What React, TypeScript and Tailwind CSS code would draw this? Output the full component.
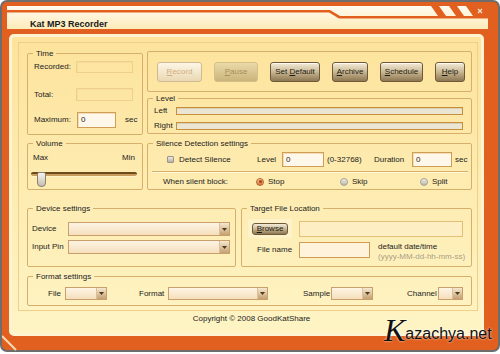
import type { ReactNode } from "react";

function Group({ title, className, children }: { title: string; className: string; children?: ReactNode }) {
  return (
    <fieldset className={`border border-[#d6b06a] rounded-[2px] ${className}`}>
      <legend className="ml-[5px] px-[3px] text-[8px] leading-[9px] text-[#222]">{title}</legend>
      {children}
    </fieldset>
  );
}

function Btn({ children, w, state = "on" }: { children: ReactNode; w: string; state?: "on" | "off" | "dim" }) {
  const look =
    state === "on"
      ? "border-[#6e5a3a] from-[#f4ecda] via-[#c9b792] to-[#8c7752] text-[#1d1a14] shadow-[inset_0_1px_0_#fffaf0]"
      : state === "off"
        ? "border-[#d0b994] from-[#fdf6e6] to-[#ead8b2] text-[#cfae80]"
        : "border-[#d4bf88] from-[#eadaa8] to-[#cbb47c] text-[#a88e5c]";
  return (
    <div className={`${w} h-[20px] flex items-center justify-center rounded-[3px] border bg-linear-to-b ${look}`}>
      {children}
    </div>
  );
}

function Combo({ w }: { w: string }) {
  return (
    <div className={`${w} h-full flex border border-[#c9a06c] bg-linear-to-b from-[#fdf4e4] to-[#f5dfbb]`}>
      <div className="flex-1" />
      <div className="w-[10px] flex items-center justify-center border-l border-[#dcc09a] bg-linear-to-b from-[#f6e8cf] to-[#c4a172]">
        <svg width="5" height="3" viewBox="0 0 5 3">
          <path d="M0 0h5L2.5 3z" fill="#4a3a22" />
        </svg>
      </div>
    </div>
  );
}

function Field({ w, h, value }: { w: string; h: string; value?: string }) {
  return (
    <div className={`${w} ${h} flex items-center pl-[3px] border border-[#cf9d55] bg-[#fff8ea] shadow-[inset_1px_1px_0_#f3dcb4]`}>
      {value}
    </div>
  );
}

function Radio({ on }: { on?: boolean }) {
  return (
    <div
      className={`w-[8px] h-[8px] rounded-full border flex items-center justify-center ${
        on ? "border-[#b5662c] bg-linear-to-b from-[#f7c7a0] to-[#d0733a]" : "border-[#a8a296] bg-linear-to-b from-[#f1eee6] to-[#bdb7aa]"
      }`}
    >
      {on && <div className="w-[3px] h-[3px] rounded-full bg-[#b2400e]" />}
    </div>
  );
}

export default function App() {
  return (
    <div className="relative w-[500px] h-[354px] bg-white font-['Liberation_Sans',Arial,sans-serif] text-[8px] leading-[10px] text-[#222]">
      <div className="w-[500px] h-[352px] border-2 border-[#6d6d6d] rounded-[7px] bg-[#e1601f] overflow-hidden flex flex-col">
        {/* title bar */}
        <div className="relative mt-[4px] ml-[5px] w-[481px] h-[23px] shrink-0 bg-linear-to-b from-[#fffaf0] to-[#fdebb8]">
          <svg className="absolute inset-0" width="481" height="23" viewBox="0 0 481 23">
            <path d="M0 4H323L333 10H481V12.5H332L322 6.5H0Z" fill="#e1601f" />
            <path d="M424 0h8l7 10h-8z" fill="#e1601f" />
            <path d="M442 0h8l7 10h-8z" fill="#e1601f" />
            <path d="M459 0h22v10h-15z" fill="#e1601f" />
            <path d="M471 3l4 4M475 3l-4 4" stroke="#f6e4cc" strokeWidth="1.2" />
          </svg>
          <div className="relative pl-[23px] pt-[13px] text-[9px] leading-[10px] font-bold text-[#1a1a1a]">Kat MP3 Recorder</div>
        </div>

        {/* main panel */}
        <div className="mt-[5px] ml-[7px] w-[475px] h-[302px] shrink-0 border-[3px] border-[#fff4d2] rounded-[5px] bg-linear-to-b from-[#fde39c] to-[#fef4c4] flex flex-col">
          <div className="ml-[6px] mt-[5px] w-[460px] h-[269px] border border-[#ecd08c] pl-[8px] pr-[5px] pt-[6px] pb-[4px] flex flex-col">
            {/* row 1 */}
            <div className="h-[86px] flex gap-[4px]">
              <Group title="Time" className="w-[116px] h-full">
                <div className="pl-[6px] flex flex-col">
                  <div className="mt-[3px] h-[12px] flex items-center">
                    <span className="w-[42px]">Recorded:</span>
                    <div className="w-[57px] h-[12px] border border-[#efd08a] shadow-[inset_1px_1px_0_#f6dc9e]" />
                  </div>
                  <div className="mt-[15px] h-[13px] flex items-center">
                    <span className="w-[42px]">Total:</span>
                    <div className="w-[57px] h-[13px] border border-[#efd08a] shadow-[inset_1px_1px_0_#f6dc9e]" />
                  </div>
                  <div className="mt-[11px] h-[16px] flex items-center">
                    <span className="w-[43px]">Maximum:</span>
                    <Field w="w-[39px]" h="h-[16px]" value="0" />
                    <span className="ml-[9px]">sec</span>
                  </div>
                </div>
              </Group>

              <div className="w-[325px] flex flex-col">
                <div className="mt-[2px] h-[41px] border border-[#d6b06a] rounded-[2px] flex items-center pl-[9px] gap-[12px]">
                  <Btn w="w-[45px]" state="off">
                    <span><u>R</u>ecord</span>
                  </Btn>
                  <Btn w="w-[44px]" state="dim">
                    <span><u>P</u>ause</span>
                  </Btn>
                  <Btn w="w-[50px]">
                    <span>Set <u>D</u>efault</span>
                  </Btn>
                  <Btn w="w-[36px]">
                    <span><u>A</u>rchive</span>
                  </Btn>
                  <Btn w="w-[43px]">
                    <span><u>S</u>chedule</span>
                  </Btn>
                  <Btn w="w-[30px]">
                    <span><u>H</u>elp</span>
                  </Btn>
                </div>
                <Group title="Level" className="mt-[2px] h-[40px]">
                  <div className="pl-[6px] flex flex-col">
                    <div className="mt-[2px] h-[12px] flex items-center">
                      <span className="w-[22px]">Left</span>
                      <div className="w-[287px] h-[8px] border border-[#c68f38] bg-[#ebe5d3] shadow-[inset_0_1px_0_#d9cfb6]" />
                    </div>
                    <div className="mt-[3px] h-[12px] flex items-center">
                      <span className="w-[22px]">Right</span>
                      <div className="w-[287px] h-[8px] border border-[#c68f38] bg-[#ebe5d3] shadow-[inset_0_1px_0_#d9cfb6]" />
                    </div>
                  </div>
                </Group>
              </div>
            </div>

            {/* row 2 */}
            <div className="mt-[4px] h-[51px] flex gap-[4px]">
              <Group title="Volume" className="w-[116px] h-full">
                <div className="mt-[5px] h-[10px] pl-[5px] pr-[7px] flex items-center justify-between">
                  <span>Max</span>
                  <span>Min</span>
                </div>
                <div className="relative mt-[9px] ml-[3px] mr-[5px] h-[16px]">
                  <div className="mt-[1px] h-[4px] rounded-[2px] border-t-2 border-[#6f4a1c] bg-[#c99c5c] shadow-[0_1px_0_#fff2c8]" />
                  <div className="absolute left-[6px] top-0 w-[9px] h-[15px] rounded-[2px] rounded-b-[4px] border border-[#8a8070] bg-linear-to-b from-[#f7f4ee] to-[#c6bfae]" />
                </div>
              </Group>

              <Group title="Silence Detection settings" className="w-[325px] h-full">
                <div className="mt-[4px] h-[15px] pl-[19px] flex items-center">
                  <div className="w-[90px] flex items-center">
                    <div className="w-[7px] h-[7px] rounded-[1px] border border-[#9a948a] bg-linear-to-b from-[#eeebe4] to-[#b5afa3]" />
                    <span className="ml-[5px]">Detect Silence</span>
                  </div>
                  <span className="w-[25px]">Level</span>
                  <Field w="w-[42px]" h="h-[15px]" value="0" />
                  <span className="ml-[3px] w-[47px]">(0-32768)</span>
                  <span className="w-[38px]">Duration</span>
                  <Field w="w-[40px]" h="h-[15px]" value="0" />
                  <span className="ml-[3px]">sec</span>
                </div>
                <div className="mt-[4px] ml-[4px] mr-[3px] h-[1px] bg-[#d6b06a] shadow-[0_1px_0_#fff6d6]" />
                <div className="mt-[4px] h-[11px] pl-[15px] flex items-center">
                  <span className="w-[93px]">When silent block:</span>
                  <div className="w-[84px] flex items-center">
                    <Radio on />
                    <span className="ml-[4px]">Stop</span>
                  </div>
                  <div className="w-[80px] flex items-center">
                    <Radio />
                    <span className="ml-[4px]">Skip</span>
                  </div>
                  <div className="flex items-center">
                    <Radio />
                    <span className="ml-[4px]">Split</span>
                  </div>
                </div>
              </Group>
            </div>

            {/* row 3 */}
            <div className="mt-[14px] h-[63px] flex gap-[5px]">
              <Group title="Device settings" className="w-[209px] h-full">
                <div className="pl-[4px] flex flex-col">
                  <div className="mt-[9px] h-[14px] flex items-center">
                    <span className="w-[36px]">Device</span>
                    <Combo w="w-[162px]" />
                  </div>
                  <div className="mt-[4px] h-[14px] flex items-center">
                    <span className="w-[36px]">Input Pin</span>
                    <Combo w="w-[162px]" />
                  </div>
                </div>
              </Group>

              <Group title="Target File Location" className="w-[231px] h-full">
                <div className="mt-[6px] h-[19px] pl-[6px] flex items-center">
                  <div className="w-[44px] h-[19px] rounded-[2px] bg-[#fef3c8] flex items-center justify-center">
                    <div className="w-[36px] h-[12px] rounded-[3px] border border-[#6e5a3a] bg-linear-to-b from-[#f4ecda] via-[#c9b792] to-[#8c7752] flex items-center justify-center text-[#1d1a14]">
                      <span><u>B</u>rowse</span>
                    </div>
                  </div>
                  <div className="ml-[7px] w-[164px] h-[16px] border border-[#e3c078] bg-[#fdeec4]" />
                </div>
                <div className="mt-[4px] pl-[6px] flex items-start">
                  <span className="w-[51px] h-[16px] pl-[9px] flex items-center">File name</span>
                  <div className="w-[71px] h-[16px] border border-[#cf9d55] bg-[#fff3dc]" />
                  <div className="ml-[8px] flex flex-col">
                    <span>default date/time</span>
                    <span className="text-[#ab9d84]">(yyyy-MM-dd-hh-mm-ss)</span>
                  </div>
                </div>
              </Group>
            </div>

            {/* row 4 */}
            <Group title="Format settings" className="mt-[5px] h-[34px]">
              <div className="mt-[6px] h-[13px] flex items-center">
                <span className="ml-[20px] w-[17px]">File</span>
                <Combo w="w-[42px]" />
                <span className="ml-[32px] w-[29px]">Format</span>
                <Combo w="w-[100px]" />
                <span className="ml-[35px] w-[28px]">Sample</span>
                <Combo w="w-[42px]" />
                <span className="ml-[34px] w-[31px]">Channel</span>
                <Combo w="w-[25px]" />
              </div>
            </Group>
          </div>

          <div className="mt-[3px] pl-[10px] text-center leading-[9px]">Copyright © 2008 GoodKatShare</div>
        </div>
      </div>

      {/* bottom-left frame corner */}
      <svg className="absolute left-[2px] top-[335px]" width="18" height="16" viewBox="0 0 18 16">
        <path d="M0 1L14 15" stroke="#f7d9b0" strokeWidth="2" />
      </svg>

      {/* watermark */}
      <div className="absolute left-[384px] top-[314px] flex items-end text-[#111] [text-shadow:0_0_2px_#fff]">
        <span className="font-['Liberation_Serif',serif] italic text-[32px] leading-[32px]">K</span>
        <span className="mb-[4px] text-[16px] leading-[16px]">azachya.net</span>
      </div>
    </div>
  );
}
